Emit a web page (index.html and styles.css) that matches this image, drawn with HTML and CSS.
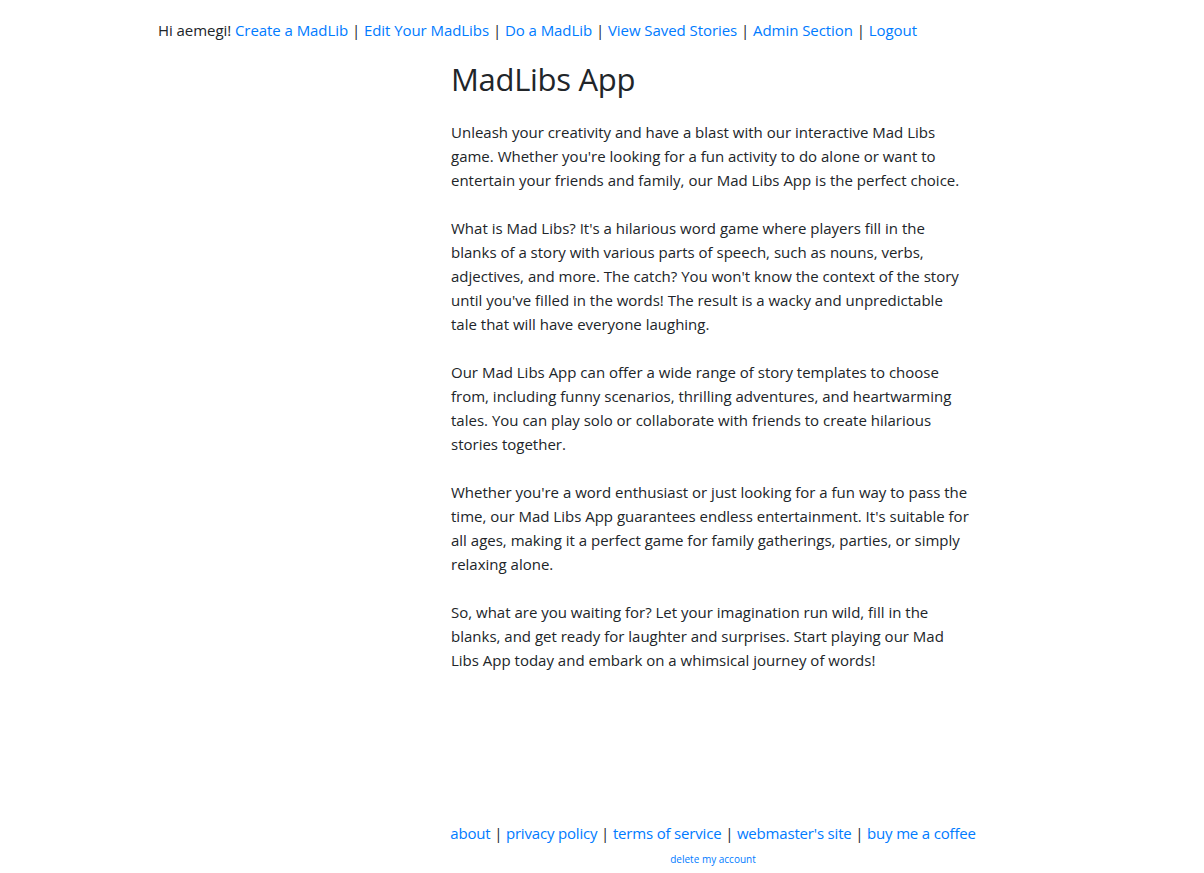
FILE: index.html
```html
<!DOCTYPE html>
<html lang="en">
<head>
<meta charset="utf-8">
<title>MadLibs App</title>
<link rel="stylesheet" href="styles.css">
</head>
<body>
<div class="page">
  <nav class="topnav">Hi aemegi! <a href="#">Create a MadLib</a> | <a href="#">Edit Your MadLibs</a> | <a href="#">Do a MadLib</a> | <a href="#">View Saved Stories</a> | <a href="#">Admin Section</a> | <a href="#">Logout</a></nav>
  <main class="content">
    <h2 class="title">MadLibs App</h2>
    <p class="para">Unleash your creativity and have a blast with our interactive Mad Libs<br>game. Whether you're looking for a fun activity to do alone or want to<br>entertain your friends and family, our Mad Libs App is the perfect choice.</p>
    <p class="para">What is Mad Libs? It's a hilarious word game where players fill in the<br>blanks of a story with various parts of speech, such as nouns, verbs,<br>adjectives, and more. The catch? You won't know the context of the story<br>until you've filled in the words! The result is a wacky and unpredictable<br>tale that will have everyone laughing.</p>
    <p class="para">Our Mad Libs App can offer a wide range of story templates to choose<br>from, including funny scenarios, thrilling adventures, and heartwarming<br>tales. You can play solo or collaborate with friends to create hilarious<br>stories together.</p>
    <p class="para">Whether you're a word enthusiast or just looking for a fun way to pass the<br>time, our Mad Libs App guarantees endless entertainment. It's suitable for<br>all ages, making it a perfect game for family gatherings, parties, or simply<br>relaxing alone.</p>
    <p class="para">So, what are you waiting for? Let your imagination run wild, fill in the<br>blanks, and get ready for laughter and surprises. Start playing our Mad<br>Libs App today and embark on a whimsical journey of words!</p>
  </main>
  <footer class="footer">
    <div class="footlinks"><a href="#">about</a> | <a href="#">privacy policy</a> | <a href="#">terms of service</a> | <a href="#">webmaster's site</a> | <a href="#">buy me a coffee</a></div>
    <div class="small"><a href="#">delete my account</a></div>
  </footer>
</div>
</body>
</html>
```
FILE: styles.css
```css
html, body {
  margin: 0;
  padding: 0;
  background: #ffffff;
}
body {
  font-family: "Open Sans", "Noto Sans", sans-serif;
  font-size: 15px;
  line-height: 24px;
  color: #212529;
}
a {
  color: #007bff;
  text-decoration: none;
}
.page {
  height: 873px;
  display: flex;
  flex-direction: column;
}
.topnav {
  padding: 18px 0 0 158px;
  white-space: nowrap;
  letter-spacing: -0.06px;
}
.content {
  margin-left: 451px;
  width: 530px;
  white-space: nowrap;
}
.title {
  font-size: 31px;
  font-weight: 400;
  line-height: 38px;
  margin: 18px 0 22px 0;
  letter-spacing: -0.3px;
}
.para {
  margin: 0 0 24px 0;
}
.footer {
  margin-top: auto;
  margin-left: 449px;
  width: 528px;
  text-align: center;
  padding-bottom: 6px;
  white-space: nowrap;
}
.footlinks {
  line-height: 24px;
  letter-spacing: -0.18px;
}
.small {
  font-size: 10px;
  line-height: 16px;
  margin-top: 6px;
}
```
